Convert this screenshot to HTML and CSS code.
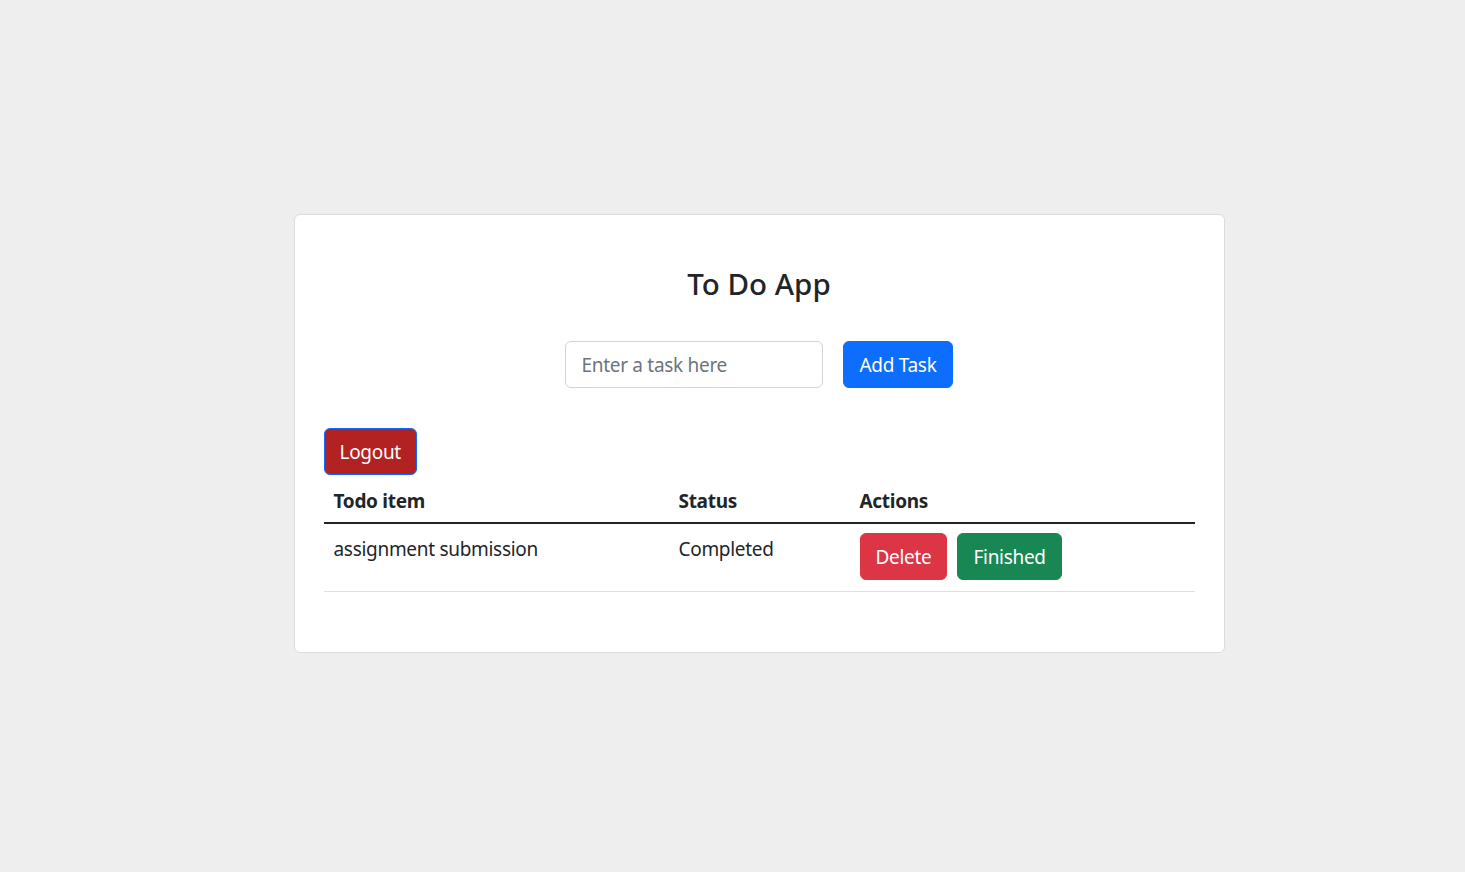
FILE: index.html
```html
<!DOCTYPE html>
<html lang="en">
<head>
<meta charset="utf-8">
<title>To Do App</title>
<link rel="stylesheet" href="styles.css">
</head>
<body>
<div class="page">
  <div class="card">
    <h2 class="title">To Do App</h2>
    <form class="add-form">
      <input class="task-input" type="text" placeholder="Enter a task here">
      <button type="button" class="btn btn-primary">Add Task</button>
    </form>
    <button type="button" class="btn btn-logout">Logout</button>
    <table class="table">
      <thead>
        <tr><th class="col-item">Todo item</th><th class="col-status">Status</th><th>Actions</th></tr>
      </thead>
      <tbody>
        <tr>
          <td>assignment submission</td>
          <td>Completed</td>
          <td class="actions"><button type="button" class="btn btn-danger">Delete</button><button type="button" class="btn btn-success">Finished</button></td>
        </tr>
      </tbody>
    </table>
  </div>
</div>
</body>
</html>
```
FILE: styles.css
```css
* { box-sizing: border-box; }
html, body { margin: 0; padding: 0; }
body {
  background: #eeeeee;
  font-family: "Noto Sans", "Open Sans", sans-serif;
  color: #212529;
  font-size: 19px;
  letter-spacing: -0.3px;
  line-height: 30px;
}
.page {
  min-height: 100vh;
  display: flex;
  align-items: center;
  justify-content: center;
  padding-left: 53px;
  padding-bottom: 5px;
}
.card {
  width: 931px;
  background: #fff;
  border: 1px solid #dcdcdc;
  border-radius: 6px;
  padding: 30px 29px 30px 29px;
}
.title {
  text-align: center;
  font-size: 29.5px;
  font-weight: 500;
  line-height: 38px;
  letter-spacing: 0;
  margin: 20px 0 38px;
}
.add-form {
  display: flex;
  justify-content: center;
  gap: 20px;
  margin: 0 0 40px;
}
.task-input {
  width: 258px;
  height: 47px;
  border: 1px solid #ced4da;
  border-radius: 6px;
  padding: 8px 15px;
  font: inherit;
  font-size: 19px;
  letter-spacing: -0.3px;
  color: #212529;
}
.task-input::placeholder { color: #6c757d; }
.btn {
  display: inline-block;
  font: inherit;
  font-size: 19px;
  letter-spacing: -0.3px;
  line-height: 30px;
  padding: 7px 15px;
  height: 47px;
  border: 1px solid transparent;
  border-radius: 6px;
  color: #fff;
  cursor: pointer;
  vertical-align: top;
}
.btn-primary { background: #0d6efd; border-color: #0d6efd; }
.btn-logout { background: #b22222; border-color: #0d6efd; }
.btn-danger { background: #dc3545; border-color: #dc3545; }
.btn-success { background: #198754; border-color: #198754; margin-left: 10px; }
.table {
  width: 100%;
  border-collapse: collapse;
  margin: 3px 0 30px;
}
.table th, .table td {
  text-align: left;
  vertical-align: top;
  padding: 8px 10px;
}
.table th { font-weight: 700; padding-bottom: 6px; }
.col-item { width: 345px; }
.col-status { width: 181px; }
.table thead tr { border-bottom: 2px solid #212529; }
.table tbody tr { border-bottom: 1px solid #dee2e6; }
.table tbody td { padding-top: 10px; padding-bottom: 10px; }
.table tbody td.actions { padding-top: 9px; padding-bottom: 11px; }
```
